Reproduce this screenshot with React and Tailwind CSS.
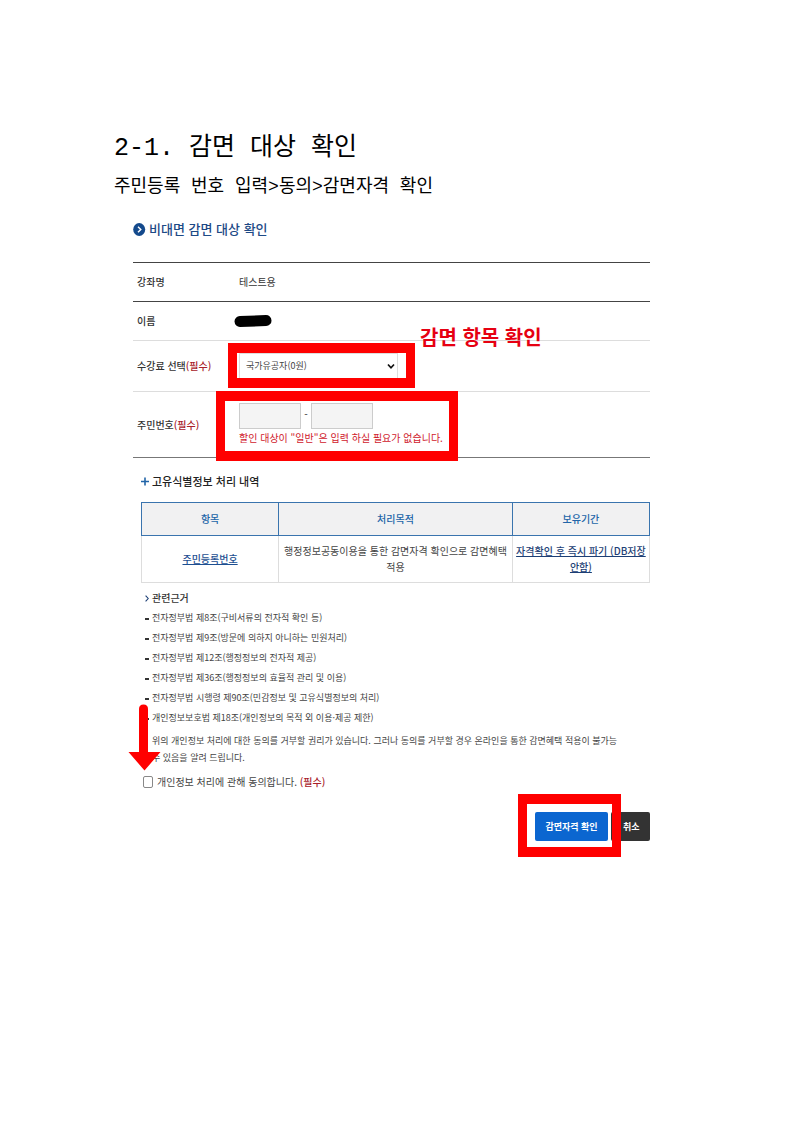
import React, { useState } from 'react';

const laws = [
  '전자정부법 제8조(구비서류의 전자적 확인 등)',
  '전자정부법 제9조(방문에 의하지 아니하는 민원처리)',
  '전자정부법 제12조(행정정보의 전자적 제공)',
  '전자정부법 제36조(행정정보의 효율적 관리 및 이용)',
  '전자정부법 시행령 제90조(민감정보 및 고유식별정보의 처리)',
  '개인정보보호법 제18조(개인정보의 목적 외 이용·제공 제한)',
];

const Required = () => <span className="text-[#a8202a]">(필수)</span>;

const FormRows = () => {
  const [front, setFront] = useState('');
  const [back, setBack] = useState('');

  return (
    <div className="mt-[21px] border-b border-[#777] text-[10px] leading-[18px] text-[#333]">
      <div className="flex border-t border-[#444] py-[10px]">
        <span className="w-[106px] shrink-0 pl-1 font-medium">강좌명</span>
        <span>테스트용</span>
      </div>
      <div className="flex items-center border-t border-[#444] py-[10px]">
        <span className="w-[101px] shrink-0 pl-1 font-medium">이름</span>
        <svg width="38" height="12" viewBox="0 0 38 12" aria-hidden="true">
          <path d="M6 6.4 L32 5.6" stroke="#000" strokeWidth="11" strokeLinecap="round" />
        </svg>
      </div>
      <div className="relative flex items-center border-t border-[#ddd] py-[12px]">
        <label htmlFor="fee" className="w-[106px] shrink-0 pl-1 font-medium">
          수강료 선택<Required />
        </label>
        <div className="relative">
          <select
            id="fee"
            className="h-[26px] w-[159px] appearance-none border border-[#ddd] bg-white pl-[6px] text-[9px] text-[#444]"
          >
            <option>국가유공자(0원)</option>
          </select>
          <svg
            className="pointer-events-none absolute right-[3px] top-[10px]"
            width="8"
            height="7"
            viewBox="0 0 8 7"
            fill="none"
            aria-hidden="true"
          >
            <path d="M1 1.5 L4 4.8 L7 1.5" stroke="#111" strokeWidth="1.7" />
          </svg>
          <div className="pointer-events-none absolute -left-[11px] -right-[17px] -top-[10px] -bottom-[9px] border-x-[9px] border-y-[10px] border-[#f00]" />
        </div>
        <strong className="absolute left-[287px] -top-[19px] text-[20px] leading-[30px] text-[#e60012]">
          감면 항목 확인
        </strong>
      </div>
      <div className="flex items-center border-t border-[#ddd]">
        <label htmlFor="rrn-front" className="w-[106px] shrink-0 pl-1 font-medium">
          주민번호<Required />
        </label>
        <div className="relative pt-[11px] pb-[10px]">
          <div className="flex">
            <input
              id="rrn-front"
              type="text"
              maxLength={6}
              value={front}
              onChange={(e) => setFront(e.target.value)}
              className="h-[26px] w-[62px] border border-[#ccc] bg-[#f4f4f4] px-1"
            />
            <span className="w-[10px] text-center leading-[22px]">-</span>
            <input
              type="password"
              aria-label="주민번호 뒷자리"
              maxLength={7}
              value={back}
              onChange={(e) => setBack(e.target.value)}
              className="h-[26px] w-[62px] border border-[#ccc] bg-[#f4f4f4] px-1"
            />
          </div>
          <p className="whitespace-nowrap text-[#d0202c]">
            할인 대상이 "일반"은 입력 하실 필요가 없습니다.
          </p>
          <div className="pointer-events-none absolute -left-[23px] -top-[1px] -bottom-[4px] w-[242px] border-x-[9px] border-y-[10px] border-[#f00]" />
        </div>
      </div>
    </div>
  );
};

const PrivacyTable = () => (
  <table className="mt-[11px] w-full table-fixed border-collapse text-center text-[10px] leading-4 text-[#444]">
    <colgroup>
      <col className="w-[27%]" />
      <col className="w-[46%]" />
      <col className="w-[27%]" />
    </colgroup>
    <thead>
      <tr className="h-[33px] bg-[#f1f1f2] text-[#2265a8]">
        <th className="border border-[#3a74ae] font-medium">항목</th>
        <th className="border border-[#3a74ae] font-medium">처리목적</th>
        <th className="border border-[#3a74ae] font-medium">보유기간</th>
      </tr>
    </thead>
    <tbody>
      <tr className="h-[47px]">
        <td className="border border-[#ddd] font-medium text-[#1d4f91] underline">주민등록번호</td>
        <td className="border border-[#ddd]">
          행정정보공동이용을 통한 감면자격 확인으로 감면혜택
          <br />
          적용
        </td>
        <td className="border border-[#ddd] font-medium text-[#1d3f75] underline">
          자격확인 후 즉시 파기 (DB저장
          <br />
          안함)
        </td>
      </tr>
    </tbody>
  </table>
);

const App = () => {
  const [agreed, setAgreed] = useState(false);

  return (
    <main
      lang="ko"
      className="min-h-screen bg-white pt-[131px] pr-[150px] pb-16 pl-[114px] font-['Noto_Sans_CJK_KR',sans-serif]"
    >
      <header className="font-['Liberation_Mono','Noto_Sans_CJK_KR',monospace] text-black">
        <h1 className="text-[25px] leading-9">2-1. 감면 대상 확인</h1>
        <p className="mt-[6px] text-[18px] leading-7">주민등록 번호 입력&gt;동의&gt;감면자격 확인</p>
      </header>

      <form className="mt-4 pl-[19px]" onSubmit={(e) => e.preventDefault()}>
        <h2 className="flex items-center gap-[3px] text-[13px] font-medium leading-6 text-[#1d4a86]">
          <svg width="13" height="13" viewBox="0 0 13 13" fill="none" aria-hidden="true">
            <ellipse cx="6.2" cy="6.5" rx="6" ry="6.5" fill="#144a8c" />
            <path d="M5 3.7 L7.8 6.5 L5 9.3" stroke="#fff" strokeWidth="1.4" />
          </svg>
          비대면 감면 대상 확인
        </h2>

        <FormRows />

        <section className="mt-[13px] pl-2">
          <h3 className="flex items-center gap-[3px] text-[11px] font-medium leading-5 text-[#222]">
            <svg width="8" height="9" viewBox="0 0 8 9" aria-hidden="true">
              <path d="M4 0.5 V8.5 M0 4.5 H8" stroke="#2265a8" strokeWidth="1.6" />
            </svg>
            고유식별정보 처리 내역
          </h3>

          <PrivacyTable />

          <div className="relative">
            <h4 className="mt-[5px] flex items-center gap-[3px] pl-1 text-[10px] font-medium leading-5 text-[#333]">
              <svg width="4" height="7" viewBox="0 0 4 7" fill="none" aria-hidden="true">
                <path d="M0.6 0.6 L3.2 3.5 L0.6 6.4" stroke="#1d3f75" strokeWidth="1.1" />
              </svg>
              관련근거
            </h4>
            <ul className="pl-1 text-[9px] leading-5 text-[#444]">
              {laws.map((law) => (
                <li key={law} className="flex items-center gap-[3px]">
                  <span className="mt-[2px] h-[2px] w-1 bg-[#333]" />
                  {law}
                </li>
              ))}
            </ul>
            <p className="mt-1 pl-[11px] text-[9px] leading-[17px] text-[#444]">
              위의 개인정보 처리에 대한 동의를 거부할 권리가 있습니다. 그러나 동의를 거부할 경우 온라인을 통한 감면혜택 적용이 불가능
              <br />
              수 있음을 알려 드립니다.
            </p>
            <svg
              className="absolute -left-[13px] bottom-0 translate-y-[5px]"
              width="33"
              height="67"
              viewBox="0 0 33 67"
              aria-hidden="true"
            >
              <path d="M11 5 Q11 0.5 15.5 0.5 Q20 0.5 20 5 V48 H32.5 L16.5 66.5 L0.5 48 H11 Z" fill="#f00" />
            </svg>
          </div>

          <label className="mt-[6px] flex items-center gap-1 pl-[2px] text-[10px] leading-5 text-[#444]">
            <input
              type="checkbox"
              checked={agreed}
              onChange={(e) => setAgreed(e.target.checked)}
              className="h-[12px] w-[10px] appearance-none rounded-[2px] border border-[#888] bg-white checked:bg-[#0b66d0]"
            />
            <span>
              개인정보 처리에 관해 동의합니다. <span className="font-medium text-[#a8202a]">(필수)</span>
            </span>
          </label>
        </section>

        <div className="mt-5 flex justify-end gap-[3px] text-[9px] font-bold text-white">
          <div className="relative">
            <button type="submit" className="h-[29px] w-[73px] rounded-[2px] bg-[#0b66d0]">
              감면자격 확인
            </button>
            <div className="pointer-events-none absolute -left-[17px] -right-[13px] -top-[18px] -bottom-[16px] border-x-[9px] border-y-[10px] border-[#f00]" />
          </div>
          <button type="button" className="h-[29px] w-[39px] rounded-[2px] bg-[#333] pl-[12px] text-left">
            취소
          </button>
        </div>
      </form>
    </main>
  );
};

export default App;
